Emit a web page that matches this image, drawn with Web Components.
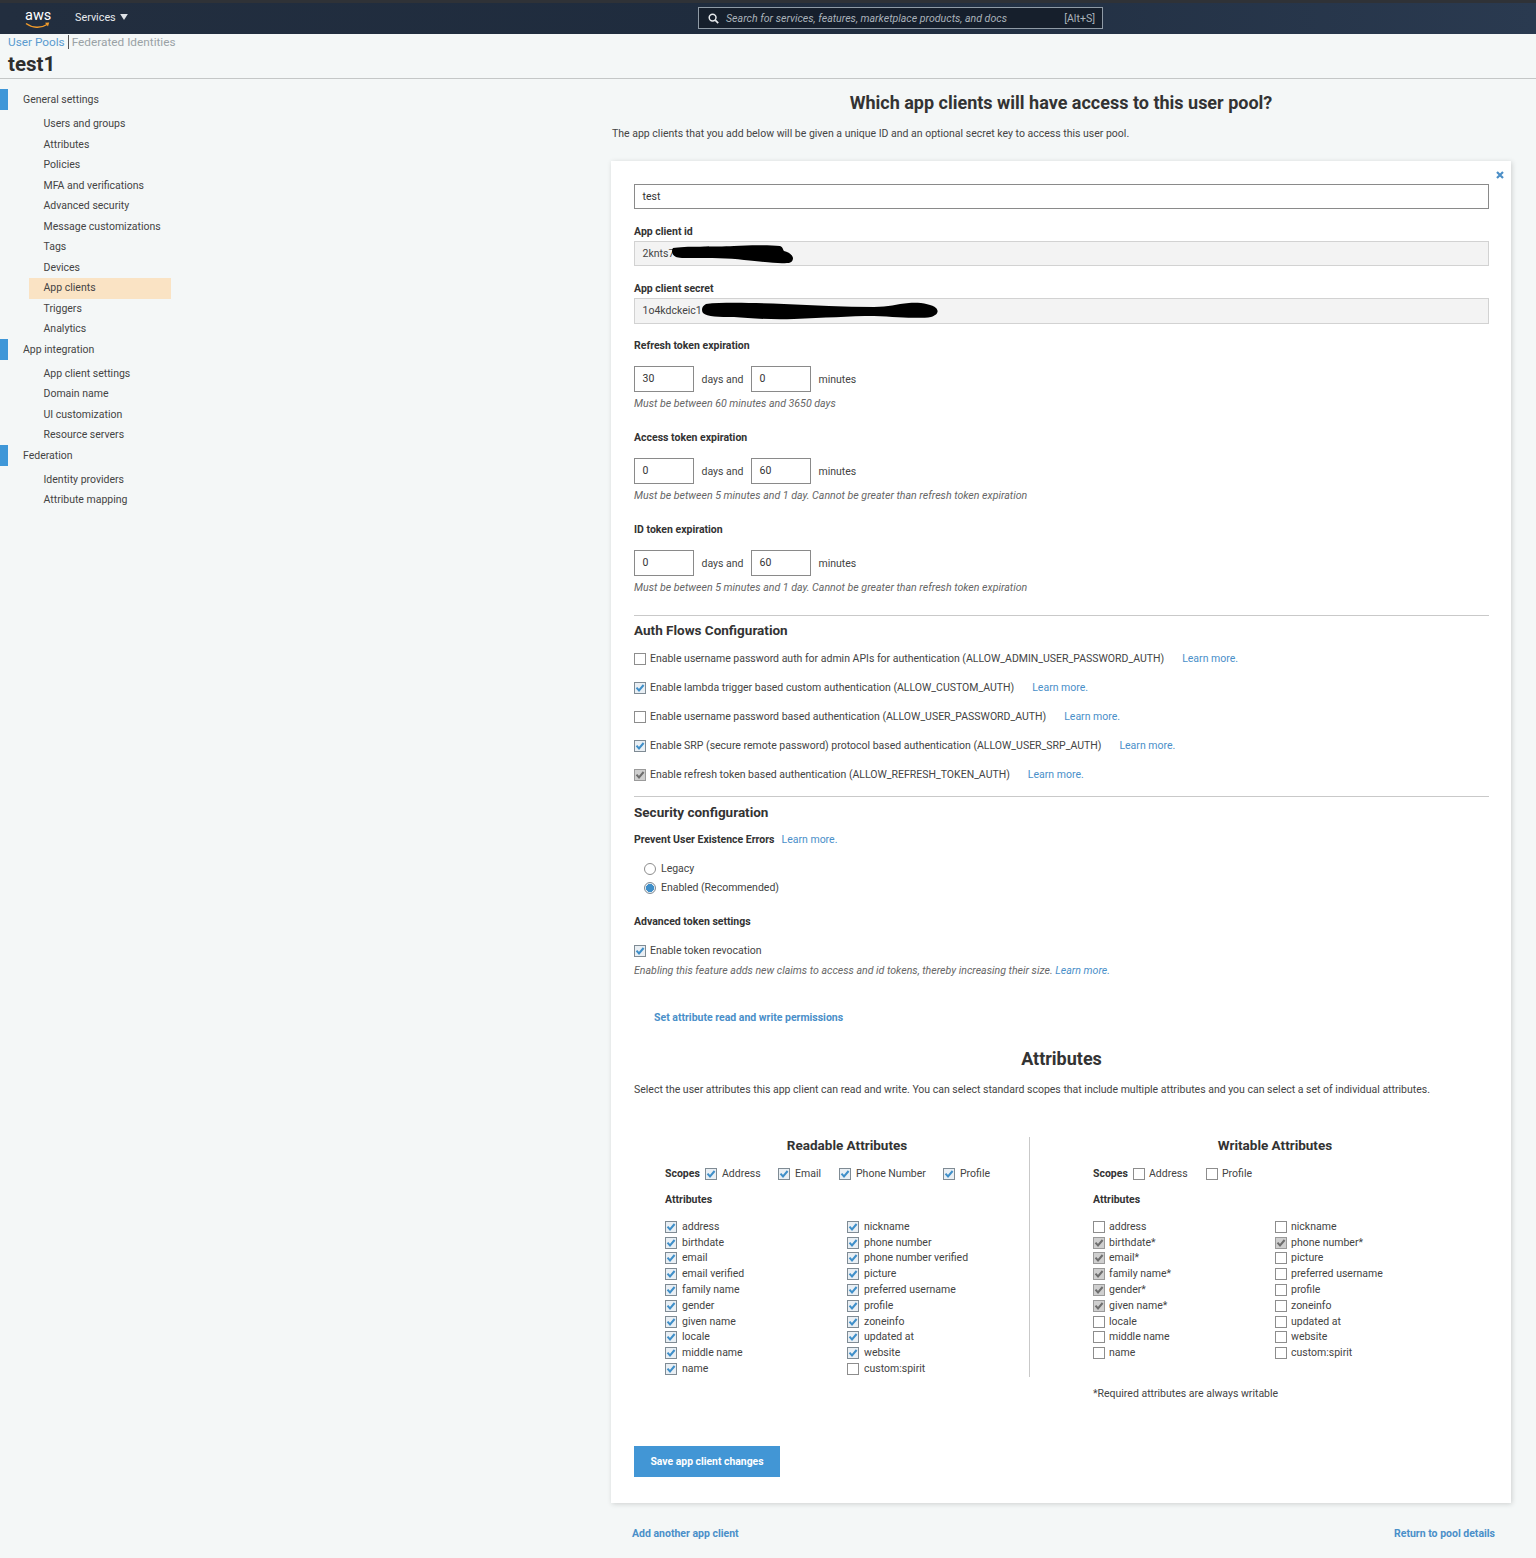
<!DOCTYPE html>
<html lang="en">
<head>
<meta charset="UTF-8">
<title>test1 - App clients</title>
<style>
    html, body { margin: 0; padding: 0; }
    body { background: #f4f7f7; font: 10.5px Roboto, "Liberation Sans", sans-serif; color: #444; }
</style>
</head>
<body>
<aws-header></aws-header>
<pool-title></pool-title>
<page-columns>
    <side-nav slot="nav">
        <nav-group style="--after:4px">General settings</nav-group>
        <nav-item>Users and groups</nav-item>
        <nav-item>Attributes</nav-item>
        <nav-item>Policies</nav-item>
        <nav-item>MFA and verifications</nav-item>
        <nav-item>Advanced security</nav-item>
        <nav-item>Message customizations</nav-item>
        <nav-item>Tags</nav-item>
        <nav-item>Devices</nav-item>
        <nav-item active>App clients</nav-item>
        <nav-item>Triggers</nav-item>
        <nav-item>Analytics</nav-item>
        <nav-group style="--after:3.6px">App integration</nav-group>
        <nav-item>App client settings</nav-item>
        <nav-item>Domain name</nav-item>
        <nav-item>UI customization</nav-item>
        <nav-item>Resource servers</nav-item>
        <nav-group style="--after:3.9px">Federation</nav-group>
        <nav-item>Identity providers</nav-item>
        <nav-item>Attribute mapping</nav-item>
    </side-nav>
    <client-page>
        <client-card>
            <text-field value="test"></text-field>
            <read-field label="App client id" value="2knts7" style="margin-top:15px" blot="short"></read-field>
            <read-field label="App client secret" value="1o4kdckeic1" style="margin-top:15px" blot="long"></read-field>
            <token-expiry label="Refresh token expiration" days="30" minutes="0" hint="Must be between 60 minutes and 3650 days" style="margin-top:14px"></token-expiry>
            <token-expiry label="Access token expiration" days="0" minutes="60" hint="Must be between 5 minutes and 1 day. Cannot be greater than refresh token expiration"></token-expiry>
            <token-expiry label="ID token expiration" days="0" minutes="60" hint="Must be between 5 minutes and 1 day. Cannot be greater than refresh token expiration"></token-expiry>

            <section-head style="margin-top:1px">Auth Flows Configuration</section-head>
            <flow-row style="margin-top:5px">Enable username password auth for admin APIs for authentication (ALLOW_ADMIN_USER_PASSWORD_AUTH)</flow-row>
            <flow-row state="on">Enable lambda trigger based custom authentication (ALLOW_CUSTOM_AUTH)</flow-row>
            <flow-row>Enable username password based authentication (ALLOW_USER_PASSWORD_AUTH)</flow-row>
            <flow-row state="on">Enable SRP (secure remote password) protocol based authentication (ALLOW_USER_SRP_AUTH)</flow-row>
            <flow-row state="lock">Enable refresh token based authentication (ALLOW_REFRESH_TOKEN_AUTH)</flow-row>

            <section-head style="margin-top:7px;--head-top:6.6px">Security configuration</section-head>
            <security-block></security-block>

            <attribute-section>
                <attr-panel slot="read" heading="Readable Attributes" gap="17"
                    scopes="Address:on:73,Email:on:61,Phone Number:on:104,Profile:on:0"
                    left="address:on,birthdate:on,email:on,email verified:on,family name:on,gender:on,given name:on,locale:on,middle name:on,name:on"
                    right="nickname:on,phone number:on,phone number verified:on,picture:on,preferred username:on,profile:on,zoneinfo:on,updated at:on,website:on,custom:spirit:off"></attr-panel>
                <attr-panel slot="write" heading="Writable Attributes" gap="16" note="*Required attributes are always writable"
                    scopes="Address:off:73,Profile:off:0"
                    left="address:off,birthdate*:lock,email*:lock,family name*:lock,gender*:lock,given name*:lock,locale:off,middle name:off,name:off"
                    right="nickname:off,phone number*:lock,picture:off,preferred username:off,profile:off,zoneinfo:off,updated at:off,website:off,custom:spirit:off"></attr-panel>
            </attribute-section>

            <save-button>Save app client changes</save-button>
        </client-card>
        <card-footer></card-footer>
    </client-page>
</page-columns>

<script>
    const FONT = 'Roboto, "Liberation Sans", sans-serif';

    // small helper, every element just gets a shadow root with its own style + markup
    function component(tag, css, html, setup) {
        customElements.define(tag, class extends HTMLElement {
            constructor() {
                super();
                this.attachShadow({ mode: 'open' });
            }
            connectedCallback() {
                const markup = typeof html === 'function' ? html(this) : html;
                this.shadowRoot.innerHTML = `<style>${css}</style>${markup}`;
                if (setup) setup(this);
            }
        });
    }

    component('aws-header', `
        :host { display: flex; align-items: center; height: 31px; border-top: 3px solid #2f3237; box-sizing: content-box;
                background: linear-gradient(90deg, #222e3f, #1f2c3e 50%, #2a3a50); color: #e8ebee; position: relative; font-family: ${FONT}; }
        .logo { width: 26px; margin-left: 25px; position: relative; height: 24px; }
        .logo span { position: absolute; left: 0; top: 1px; font-size: 14.5px; line-height: 15px; color: #fff; }
        .logo svg { position: absolute; left: 0; top: 14px; }
        .services { margin-left: 24px; font-size: 10.8px; display: flex; align-items: center; gap: 4px; margin-top: -3px; }
        .search { position: absolute; left: 698px; top: 4px; width: 403px; height: 20px; border: 1px solid #8f9aa5; background: #161f2c;
                  display: flex; align-items: center; color: #aab2ba; font-size: 10.6px; }
        .search svg { margin: 0 7px 0 9px; }
        .search em { flex: 1; }
        .search span { margin-right: 7px; }
    `, `
        <div class="logo"><span>aws</span>
            <svg width="26" height="9" viewBox="0 0 26 9"><path d="M1 2.5C7 7 16 7.5 22 3.5" fill="none" stroke="#f29c2b" stroke-width="1.4"/><path d="M20 1.8L24.2 1.6L23 5.4Z" fill="#f29c2b"/></svg>
        </div>
        <div class="services">Services
            <svg width="8" height="6" viewBox="0 0 9 7"><path d="M0 0H9L4.5 7Z" fill="#dfe3e7"/></svg>
        </div>
        <div class="search">
            <svg width="11" height="11" viewBox="0 0 11 11"><circle cx="4.6" cy="4.6" r="3.4" fill="none" stroke="#e6e9ec" stroke-width="1.5"/><path d="M7.2 7.2L10.2 10.2" stroke="#e6e9ec" stroke-width="1.7"/></svg>
            <em>Search for services, features, marketplace products, and docs</em><span>[Alt+S]</span>
        </div>
    `);

    component('pool-title', `
        :host { display: block; height: 44px; border-bottom: 1px solid #c4c7c7; padding-left: 8px; font-family: ${FONT}; }
        .tabs { display: flex; align-items: center; height: 15px; font-size: 11.8px; }
        .tabs a { color: #5a9bd0; padding-right: 3px; border-right: 1px solid #555; line-height: 14px; }
        .tabs span { color: #9aa2a6; padding-left: 3px; }
        h1 { margin: 4px 0 0; font-size: 20.5px; line-height: 22px; color: #2d2d2d; font-weight: 700; }
    `, `<div class="tabs"><a>User Pools</a><span>Federated Identities</span></div><h1>test1</h1>`);

    component('page-columns', `
        :host { display: flex; }
        .nav { width: 611px; flex: none; }
        .main { width: 900px; flex: none; }
    `, `<div class="nav"><slot name="nav"></slot></div><div class="main"><slot></slot></div>`);

    component('side-nav', `:host { display: block; padding-top: 10.5px; font-family: ${FONT}; font-size: 10.5px; color: #444; }`, `<slot></slot>`);

    component('nav-group', `
        :host { display: block; height: 21px; margin-top: -.5px; padding-bottom: var(--after, 3.8px); }
        div { height: 21px; line-height: 21px; border-left: 8px solid #3f97d8; padding-left: 15px; }
    `, `<div><slot></slot></div>`);

    component('nav-item', `
        :host { display: block; height: 20.5px; line-height: 20.5px; margin-left: 29px; width: 142px; box-sizing: border-box; padding-left: 14.5px; }
        :host([active]) { background: #fae3c4; }
    `, `<slot></slot>`);

    component('client-page', `
        :host { display: block; font-family: ${FONT}; }
        h2 { margin: 0; padding-top: 12px; height: 25px; font-size: 18px; line-height: 23px; text-align: center; color: #333; font-weight: 700; }
        p { margin: 0; padding: 11px 0 0 1px; height: 34px; line-height: 14px; font-size: 10.5px; color: #444; }
    `, `<h2>Which app clients will have access to this user pool?</h2>
        <p>The app clients that you add below will be given a unique ID and an optional secret key to access this user pool.</p>
        <slot></slot>`);

    component('client-card', `
        :host { display: block; position: relative; background: #fff; box-shadow: 1px 1px 5px rgba(0,0,0,.16); padding: 23px 22px 26px 23px; font-size: 10.5px; }
        .close { position: absolute; right: 7px; top: 10px; }
    `, `<svg class="close" width="8" height="8" viewBox="0 0 8 8"><path d="M1 1L7 7M7 1L1 7" stroke="#4c8fc7" stroke-width="2.2"/></svg><slot></slot>`);

    component('text-field', `
        :host { display: block; height: 25px; box-sizing: border-box; border: 1px solid #8a8a8a; padding-left: 7.5px; line-height: 23px; font-size: 10.5px; color: #333; }
    `, el => el.getAttribute('value'));

    component('read-field', `
        :host { display: block; position: relative; }
        label { display: block; height: 15px; line-height: 15px; font-weight: 700; font-size: 10.5px; color: #333; margin-bottom: 2px; }
        div { height: 25px; box-sizing: border-box; border: 1px solid #d2d2d2; background: #f3f3f3; padding-left: 7.5px; line-height: 23px; font-size: 10.5px; color: #444; }
        :host([blot=long]) div { height: 26px; }
        svg { position: absolute; left: 0; top: 17px; }
    `, el => {
        // the black marker strokes that hide the ids in the screenshot
        const blot = el.getAttribute('blot') === 'short'
            ? 'M39 7C50 5 80 6 100 5C115 4 135 4 146 5C149 6 149 9 150 10C154 11 158 13 159 17C159 20 157 22 153 22C145 23 130 21 110 19C95 17 75 17 60 17C50 17 44 17 42 16C38 14 37 10 39 7Z'
            : 'M72 6C90 4 120 5 150 6C180 7 210 9 240 9C255 9 262 6 275 5C285 4 298 6 302 10C305 13 304 17 297 19C285 21 265 19 240 18C215 18 190 20 160 21C135 22 115 20 100 19C85 19 73 19 69 15C67 12 68 8 72 6Z';
        return `<label>${el.getAttribute('label')}</label><div>${el.getAttribute('value')}</div>
            <svg width="340" height="25" viewBox="0 0 340 25"><path d="${blot}" fill="#000"/></svg>`;
    });

    component('token-expiry', `
        :host { display: block; height: 92px; color: #444; font-size: 10.5px; }
        label { display: block; height: 15px; line-height: 15px; font-weight: 700; color: #333; margin-bottom: 13px; }
        .row { display: flex; align-items: center; height: 26px; }
        .box { width: 60px; height: 26px; box-sizing: border-box; border: 1px solid #8a8a8a; background: #fff; padding-left: 7.5px; line-height: 24px; color: #333; }
        .row span { margin: 0 7.5px; }
        em { display: block; margin-top: 5px; line-height: 14px; color: #666; font-size: 10.6px; }
    `, el => `<label>${el.getAttribute('label')}</label>
        <div class="row"><div class="box">${el.getAttribute('days')}</div><span>days and</span><div class="box">${el.getAttribute('minutes')}</div><span>minutes</span></div>
        <em>${el.getAttribute('hint')}</em>`);

    component('section-head', `
        :host { display: block; border-top: 1px solid #c9c9c9; padding-top: var(--head-top, 6px); font-size: 13.5px; line-height: 17px; font-weight: 700; color: #333; }
    `, `<slot></slot>`);

    component('check-box', `
        :host { display: inline-flex; align-items: center; height: 14px; line-height: 14px; color: #444; white-space: nowrap; }
        i { display: block; width: 12px; height: 12px; box-sizing: border-box; border: 1px solid #8d8d8d; background: #fff; margin-right: var(--check-gap, 4px); flex: none; position: relative; }
        :host([state=on]) i { background: #e9eff4; border-color: #7f8b94; }
        :host([state=lock]) i { background: #cfcfcf; border-color: #9a9a9a; }
        svg { position: absolute; left: 0; top: 0; display: none; }
        :host([state=on]) svg, :host([state=lock]) svg { display: block; }
        path { stroke: #3f8fc9; }
        :host([state=lock]) path { stroke: #6e6e6e; }
    `, `<i><svg width="10" height="10" viewBox="0 0 10 10"><path d="M1.5 4.6L4 7.4L8.6 2" fill="none" stroke-width="2"/></svg></i><slot></slot>`);

    component('flow-row', `
        :host { display: flex; align-items: center; height: 29px; font-size: 10.5px; }
        a { color: #4a8fc9; margin-left: 18px; }
    `, el => `<check-box state="${el.getAttribute('state') || 'off'}"><slot></slot></check-box><a>Learn more.</a>`);

    component('security-block', `
        :host { display: block; font-size: 10.5px; color: #444; }
        b { color: #333; }
        a { color: #4a8fc9; }
        .top { height: 14px; line-height: 14px; margin-top: 12.4px; margin-bottom: 12.2px; }
        .top a { margin-left: 4.5px; }
        .radio { display: flex; align-items: center; height: 19px; padding-left: 10px; gap: 5px; }
        .radio i { width: 12px; height: 12px; box-sizing: border-box; border: 1px solid #8d8d8d; border-radius: 50%; background: #fff; }
        .radio.on i { border-color: #7f8b94; background: radial-gradient(circle, #3f8fc9 0 3.8px, #e9eff4 4.3px); }
        .adv { display: block; height: 14px; line-height: 14px; margin-top: 17.8px; }
        .token { margin-top: 15px; display: flex; }
        em { display: block; margin-top: 6px; line-height: 14px; color: #666; font-size: 10.6px; }
        .perm { display: block; margin: 33px 0 0 20px; height: 14px; line-height: 14px; font-weight: 700; }
    `, `<div class="top"><b>Prevent User Existence Errors</b> <a>Learn more.</a></div>
        <div class="radio"><i></i>Legacy</div>
        <div class="radio on"><i></i>Enabled (Recommended)</div>
        <b class="adv">Advanced token settings</b>
        <check-box class="token" state="on">Enable token revocation</check-box>
        <em>Enabling this feature adds new claims to access and id tokens, thereby increasing their size. <a>Learn more.</a></em>
        <a class="perm">Set attribute read and write permissions</a>`);

    component('attribute-section', `
        :host { display: block; font-size: 10.5px; }
        h3 { margin: 22px 0 0; height: 24px; line-height: 24px; font-size: 18px; font-weight: 700; text-align: center; color: #333; }
        p { margin: 12px 0 0; line-height: 14px; color: #444; }
        .cols { display: flex; margin-top: 40px; height: 240px; }
        .read { width: 364px; padding-left: 31px; border-right: 1px solid #c9c9c9; flex: none; }
        .write { padding-left: 63px; flex: 1; }
    `, `<h3>Attributes</h3>
        <p>Select the user attributes this app client can read and write. You can select standard scopes that include multiple attributes and you can select a set of individual attributes.</p>
        <div class="cols"><div class="read"><slot name="read"></slot></div><div class="write"><slot name="write"></slot></div></div>`);

    // entries are "label:state" or "label:state:width" (label may hold a colon, as in custom:spirit)
    function parseEntries(text) {
        return text.split(',').map(entry => {
            const parts = entry.split(':');
            const last = parts.pop();
            if (/^\d+$/.test(last)) {
                const state = parts.pop();
                return { name: parts.join(':'), state, width: +last };
            }
            return { name: parts.join(':'), state: last };
        });
    }

    component('attr-panel', `
        :host { display: block; width: 365px; font-size: 10.5px; color: #444; }
        h4 { margin: 0; font-size: 13.5px; line-height: 17px; font-weight: 700; color: #333; text-align: center; width: 364px; }
        .scopes { display: flex; align-items: center; height: 14px; margin-top: 13px; }
        .scopes b { width: 40px; color: #333; flex: none; }
        .attrs { font-weight: 700; height: 14px; line-height: 14px; margin-top: 12px; color: #333; }
        .lists { display: flex; margin-top: 12px; }
        .lists > div { width: 182px; }
        .lists check-box { display: flex; height: 15.8px; }
        .note { margin-top: 25.5px; line-height: 14px; }
    `, el => {
        const row = e => `<check-box state="${e.state}">${e.name}</check-box>`;
        const scopes = parseEntries(el.getAttribute('scopes')).map(e =>
            `<check-box state="${e.state}" ${e.width ? `style="flex:none;width:${e.width}px"` : ''}>${e.name}</check-box>`).join('');
        const note = el.getAttribute('note');
        return `<h4>${el.getAttribute('heading')}</h4>
            <div class="scopes"><b>Scopes</b>${scopes}</div>
            <div class="attrs">Attributes</div>
            <div class="lists"><div>${parseEntries(el.getAttribute('left')).map(row).join('')}</div><div>${parseEntries(el.getAttribute('right')).map(row).join('')}</div></div>
            ${note ? `<div class="note">${note}</div>` : ''}`;
    }, el => {
        el.shadowRoot.querySelectorAll('check-box').forEach(box => box.style.setProperty('--check-gap', el.getAttribute('gap') - 12 + 'px'));
    });

    component('save-button', `
        :host { display: block; width: 146px; height: 31px; margin-top: 69px; background: #4296d5; color: #fff; font-weight: 700; font-size: 10.4px; line-height: 31px; text-align: center; }
    `, `<slot></slot>`);

    component('card-footer', `
        :host { display: flex; justify-content: space-between; height: 55px; padding: 24px 16px 0 21px; box-sizing: border-box; font-size: 10.5px; font-weight: 700; color: #4a8fc9; line-height: 14px; }
    `, `<span>Add another app client</span><span>Return to pool details</span>`);
</script>
</body>
</html>
